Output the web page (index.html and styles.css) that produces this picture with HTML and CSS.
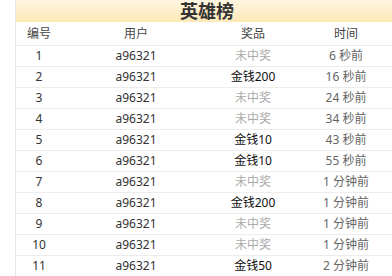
FILE: index.html
```html
<!DOCTYPE html>
<html lang="zh">
<head>
<meta charset="utf-8">
<link rel="stylesheet" href="styles.css">
</head>
<body>
<div class="panel">
  <div class="title-bar"><h2 class="title">英雄榜</h2></div>
  <div class="table">
    <div class="row head"><span>编号</span><span>用户</span><span>奖品</span><span>时间</span></div>
    <div class="row"><span>1</span><span>a96321</span><span class="none">未中奖</span><span class="time">6 秒前</span></div>
    <div class="row"><span>2</span><span>a96321</span><span class="win">金钱200</span><span class="time">16 秒前</span></div>
    <div class="row"><span>3</span><span>a96321</span><span class="none">未中奖</span><span class="time">24 秒前</span></div>
    <div class="row"><span>4</span><span>a96321</span><span class="none">未中奖</span><span class="time">34 秒前</span></div>
    <div class="row"><span>5</span><span>a96321</span><span class="win">金钱10</span><span class="time">43 秒前</span></div>
    <div class="row"><span>6</span><span>a96321</span><span class="win">金钱10</span><span class="time">55 秒前</span></div>
    <div class="row"><span>7</span><span>a96321</span><span class="none">未中奖</span><span class="time">1 分钟前</span></div>
    <div class="row"><span>8</span><span>a96321</span><span class="win">金钱200</span><span class="time">1 分钟前</span></div>
    <div class="row"><span>9</span><span>a96321</span><span class="none">未中奖</span><span class="time">1 分钟前</span></div>
    <div class="row"><span>10</span><span>a96321</span><span class="none">未中奖</span><span class="time">1 分钟前</span></div>
    <div class="row"><span>11</span><span>a96321</span><span class="win">金钱50</span><span class="time">2 分钟前</span></div>
  </div>
</div>
</body>
</html>
```
FILE: styles.css
```css
html, body {
  margin: 0;
  padding: 0;
  background: #fff;
  overflow: hidden;
}
body {
  font-family: "Noto Sans", "Noto Sans CJK SC", sans-serif;
  font-size: 12px;
  color: #333;
}
.panel {
  margin-left: 15px;
  width: 380px;
  border-left: 1px solid #e6e6e6;
}
.title-bar {
  height: 22px;
  background: linear-gradient(#fef6e1, #fde8b6);
}
.title {
  margin: 0;
  font-size: 18px;
  font-weight: bold;
  line-height: 21px;
  text-align: center;
  color: #333;
  font-family: "Noto Sans CJK SC", sans-serif;
  padding-left: 2px;
}
.row {
  display: grid;
  grid-template-columns: 46px 148px 86px 100px;
  height: 20px;
  line-height: 20px;
  border-bottom: 1px solid #ececec;
  text-align: center;
  white-space: nowrap;
}
.row.head {
  height: 23px;
  line-height: 23px;
  color: #444;
}
.none { color: #aaa; }
.win { color: #111; }
.time { color: #666; }
```
